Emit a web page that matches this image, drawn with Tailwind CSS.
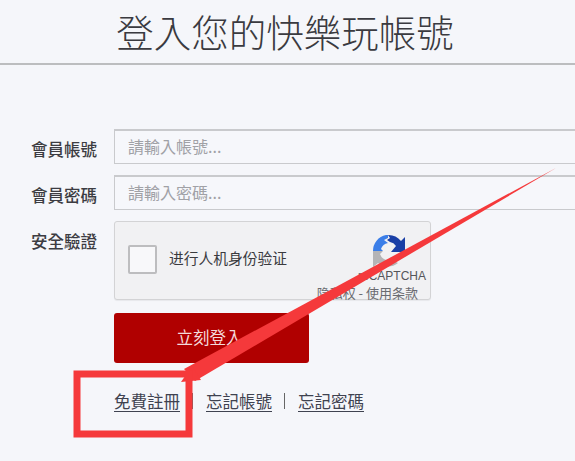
<!DOCTYPE html>
<html lang="zh-Hant">
<head>
<meta charset="utf-8">
<script src="https://cdn.jsdelivr.net/npm/@tailwindcss/browser@4"></script>
</head>
<body class="m-0 bg-[#f5f6fa]">
<div class="relative w-[575px] h-[461px] overflow-hidden bg-[#f5f6fa] font-['Noto_Sans_CJK_TC','Noto_Sans',sans-serif] text-[#333]">
  <header class="h-[65px] border-b-[2px] border-[#bcbdbf] flex justify-center pt-[6px]">
    <h1 class="m-0 text-[37.5px] leading-[50px] font-extralight text-[#3a3a40] ml-[-5px]">登入您的快樂玩帳號</h1>
  </header>

  <form class="flex flex-col pt-[64px] pl-[31px]">
    <div class="flex items-center h-[34px]">
      <label class="w-[83px] shrink-0 text-[16.5px] leading-[24px] font-medium text-[#3c3c42] pt-[5px]">會員帳號</label>
      <div class="w-[480px] h-[35px] shrink-0 border border-[#c9cacd] border-t-2 bg-[#f6f7fb] pl-[13px] text-[16px] leading-[30px] text-[#a0a1a6]">請輸入帳號...</div>
    </div>
    <div class="flex items-center h-[34px] mt-[12px]">
      <label class="w-[83px] shrink-0 text-[16.5px] leading-[24px] font-medium text-[#3c3c42] pt-[5px]">會員密碼</label>
      <div class="w-[480px] h-[35px] shrink-0 border border-[#c9cacd] border-t-2 bg-[#f6f7fb] pl-[13px] text-[16px] leading-[30px] text-[#a0a1a6]">請輸入密碼...</div>
    </div>
    <div class="flex items-start mt-[12px]">
      <label class="w-[83px] shrink-0 text-[16.5px] leading-[24px] font-medium text-[#3c3c42] pt-[8px]">安全驗證</label>
      <div class="relative w-[317px] h-[79px] shrink-0 rounded-[3px] border border-[#d3d3d5] bg-[#f1f1f3] flex items-center pl-[13px] shadow-[0_1px_1px_rgba(0,0,0,0.06)]">
        <div class="w-[29px] h-[29px] mt-[-3px] rounded-[2px] border-2 border-[#bdbdbf] bg-[#f8f8fa]"></div>
        <span class="ml-[12px] mt-[-4px] text-[14.75px] text-[#3a3a3e] whitespace-nowrap">进行人机身份验证</span>
        <div class="absolute right-[4px] top-[11px] w-[110px] flex flex-col items-end">
          <svg class="mr-[20px]" width="34" height="36" viewBox="0 0 34 34" fill="none">
            <path d="M1 17 A16 16 0 0 1 14 1 L16 1 L16 4 L12 6 L16 9 A9 9 0 0 0 9 15 L11 17 Z" fill="#3b7ee8"/>
            <path d="M16 1 A16 16 0 0 1 29 7 L33 3 L33 18 L19 18 L24 12 A9 9 0 0 0 18 8 L15 6 L18 4 Z" fill="#1a3fa6"/>
            <path d="M1 17 L11 17 L8 20 A9 9 0 0 0 17 26 L19 23 L22 27 L26 29 A16 16 0 0 1 6 29 L1 33 Z" fill="#b4b4b6"/>
          </svg>
          <span class="mt-[0px] text-[12px] leading-[14px] font-['Liberation_Sans',sans-serif] text-[#55565a]">reCAPTCHA</span>
          <span class="mt-[2px] mr-[8px] text-[13px] leading-[15px] whitespace-nowrap text-[#6a6b70]">隐私权 - 使用条款</span>
        </div>
      </div>
    </div>
    <div class="pl-[83px] mt-[13px]">
      <button type="button" class="w-[195px] h-[50px] rounded-[3px] bg-[#b00000] text-[#f4dada] text-[16.5px] leading-[22px] pb-[3px] pr-[4px] font-normal">立刻登入</button>
    </div>
    <nav class="pl-[83px] mt-[26px] flex items-center text-[16.5px] leading-[24px] text-[#3f4250]">
      <a class="underline underline-offset-[3px]">免費註冊</a>
      <span class="ml-[12px] mr-[13px] w-[1px] h-[16px] bg-[#666]"></span>
      <a class="underline underline-offset-[3px]">忘記帳號</a>
      <span class="ml-[12px] mr-[13px] w-[1px] h-[16px] bg-[#666]"></span>
      <a class="underline underline-offset-[3px]">忘記密碼</a>
    </nav>
  </form>

  <svg class="absolute inset-0 pointer-events-none" width="575" height="461" viewBox="0 0 575 461" fill="none">
    <polygon points="556,168 184,369 195,381" fill="#f5393b"/>
    <polygon points="192,366 181,382 201,380" fill="#f5393b"/>
    <rect x="77" y="374" width="112" height="60" stroke="#f5393b" stroke-width="7"/>
  </svg>
</div>
</body>
</html>
